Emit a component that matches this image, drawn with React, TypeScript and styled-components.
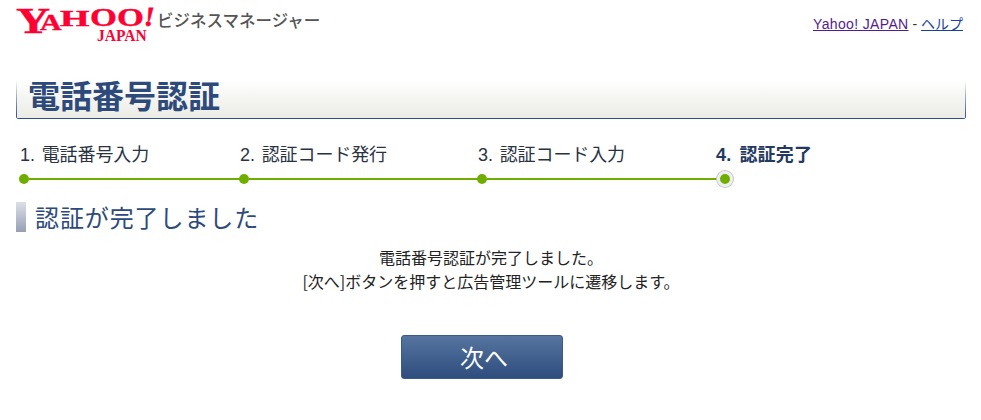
import React from "react";
import styled, { createGlobalStyle } from "styled-components";

const Global = createGlobalStyle`
  html, body { margin: 0; padding: 0; background: #fff; }
  body { font-family: "Liberation Sans", "Noto Sans CJK JP", sans-serif; color: #222; overflow: hidden; }
`;
const Page = styled.div`
  width: 981px; height: 420px; box-sizing: border-box; padding: 0 15px 0 16px; overflow: hidden;
`;
const Header = styled.header`
  display: flex; justify-content: space-between; align-items: flex-start; height: 80px;
`;
const Brand = styled.div`
  display: flex; align-items: flex-start; padding-top: 6px;
`;
const Logo = styled.div`
  position: relative; width: 137px; height: 36px; flex: none;
`;
const LogoLetter = styled.span<{ $x: number; $y: number; $size: number; $sx: number }>`
  position: absolute; left: ${(p) => p.$x}px; top: ${(p) => p.$y}px;
  font-family: "Liberation Serif", serif; font-weight: 700; color: #ff0033;
  font-size: ${(p) => p.$size}px; line-height: 1; -webkit-text-stroke: .4px #ff0033;
  transform: scaleX(${(p) => p.$sx}); transform-origin: left top;
`;
const LogoBang = styled(LogoLetter)`
  font-style: italic; -webkit-text-stroke: .8px #ff0033;
`;
const LogoJapan = styled.span`
  position: absolute; left: 81px; top: 21px; font-family: "Liberation Serif", serif; font-weight: 700;
  color: #ff0033; font-size: 15.5px; line-height: 1;
  transform: scaleY(1.1); transform-origin: left top;
`;
const Product = styled.span`
  font-family: "Noto Sans CJK JP", sans-serif; font-weight: 500; font-size: 16.5px; line-height: 24px; color: #555;
  margin: 2px 0 0 4px; white-space: nowrap;
`;
const Links = styled.div`
  font-size: 14px; line-height: 18px; padding-top: 15px; padding-right: 3px; color: #333;
`;
const HeadLink = styled.a<{ $visited?: boolean }>`
  color: ${(p) => (p.$visited ? "#551a8b" : "#1a3f9f")}; text-decoration: underline;
  letter-spacing: ${(p) => (p.$visited ? ".35px" : "0")};
`;
const TitleBar = styled.h1`
  margin: 0; height: 39px; box-sizing: border-box; padding-left: 12px;
  background:
    linear-gradient(rgba(45, 79, 134, 0), #2d4f86) left top / 1px 100% no-repeat,
    linear-gradient(rgba(45, 79, 134, 0), #2d4f86) right top / 1px 100% no-repeat,
    linear-gradient(#fff 0%, #f2f2ee 60%, #ecece7 100%);
  border-bottom: 1px solid #2d4f86; border-radius: 0 0 3px 3px;
  font-family: "Noto Sans CJK JP", sans-serif; font-weight: 700; font-size: 32px; line-height: 28px; color: #2d4a7a;
  white-space: nowrap;
`;
const Steps = styled.ol`
  list-style: none; margin: 0; padding: 24px 0 0 4px; display: flex; height: 83px; box-sizing: border-box;
`;
const Step = styled.li<{ $w: number }>`
  width: ${(p) => p.$w}px; flex: none; display: flex; flex-direction: column;
`;
const StepLabel = styled.span<{ $current?: boolean }>`
  font-family: "Liberation Sans", "Noto Sans CJK JP", sans-serif; font-size: 18px; line-height: 24px; height: 24px;
  word-spacing: ${(p) => (p.$current ? "3px" : "2px")};
  letter-spacing: ${(p) => (p.$current ? ".15px" : "-.1px")};
  font-weight: ${(p) => (p.$current ? 700 : 400)}; color: ${(p) => (p.$current ? "#24395f" : "#2a3242")};
  white-space: nowrap;
`;
const Track = styled.div`
  display: flex; align-items: center; height: 12px; margin-top: 6px;
`;
const Dot = styled.span`
  width: 10px; height: 10px; border-radius: 50%; background: #6fae00; flex: none; margin-left: -1px;
`;
const Line = styled.span`
  flex: 1; height: 2px; background: #6fae00; margin-right: -1px;
`;
const CurrentDot = styled.span`
  width: 10px; height: 10px; border-radius: 50%; background: #6fae00; flex: none;
  margin-left: 1px; border: 3px solid #eee; box-shadow: 0 0 0 1px #c9c9c9;
`;
const SectionTitle = styled.h2`
  margin: 0; height: 30px; display: flex; align-items: center; gap: 9px;
  font-family: "Noto Sans CJK JP", sans-serif; font-weight: 400; font-size: 24px; letter-spacing: .9px; color: #2d4a7a;
  line-height: 30px;
  &::before { content: ""; width: 10px; height: 30px; background: linear-gradient(#dcdfe8, #989fb5); flex: none; }
`;
const Body = styled.div`
  margin-top: 13px; text-align: center; font-family: "Noto Sans CJK JP", sans-serif; font-size: 16px; line-height: 24px; color: #222;
`;
const Para = styled.p`
  margin: 0;
`;
const ButtonRow = styled.div`
  display: flex; justify-content: center; margin-top: 42px; padding-right: 18px;
`;
const NextButton = styled.button`
  width: 162px; height: 44px; padding: 0 0 0 4px; border: 1px solid #3b5a8a; border-radius: 3px;
  background: linear-gradient(#56749f, #2e4d7d); color: #fff;
  font-family: "Noto Sans CJK JP", sans-serif; font-size: 24px; line-height: 40px;
`;

export default function App() {
  return (
    <Page>
      <Global />
      <Header>
        <Brand>
          <Logo aria-label="Yahoo! JAPAN">
            <LogoLetter $x={0} $y={-2} $size={35} $sx={1.35}>Y</LogoLetter>
            <LogoLetter $x={24} $y={5} $size={23} $sx={1.3}>A</LogoLetter>
            <LogoLetter $x={44} $y={1} $size={23} $sx={1.65}>H</LogoLetter>
            <LogoLetter $x={74} $y={-1} $size={26} $sx={1.33}>O</LogoLetter>
            <LogoLetter $x={101} $y={-1} $size={26} $sx={1.33}>O</LogoLetter>
            <LogoBang $x={128} $y={-2} $size={27} $sx={1}>!</LogoBang>
            <LogoJapan>JAPAN</LogoJapan>
          </Logo>
          <Product>ビジネスマネージャー</Product>
        </Brand>
        <Links>
          <HeadLink $visited href="#">Yahoo! JAPAN</HeadLink> - <HeadLink href="#">ヘルプ</HeadLink>
        </Links>
      </Header>
      <TitleBar>電話番号認証</TitleBar>
      <Steps>
        <Step $w={220}><StepLabel>1. 電話番号入力</StepLabel><Track><Dot /><Line /></Track></Step>
        <Step $w={238}><StepLabel>2. 認証コード発行</StepLabel><Track><Dot /><Line /></Track></Step>
        <Step $w={238}><StepLabel>3. 認証コード入力</StepLabel><Track><Dot /><Line /></Track></Step>
        <Step $w={100}>
          <StepLabel $current>4. 認証完了</StepLabel>
          <Track><CurrentDot /></Track>
        </Step>
      </Steps>
      <SectionTitle>認証が完了しました</SectionTitle>
      <Body>
        <Para>電話番号認証が完了しました。</Para>
        <Para>[次へ]ボタンを押すと広告管理ツールに遷移します。</Para>
      </Body>
      <ButtonRow>
        <NextButton>次へ</NextButton>
      </ButtonRow>
    </Page>
  );
}
